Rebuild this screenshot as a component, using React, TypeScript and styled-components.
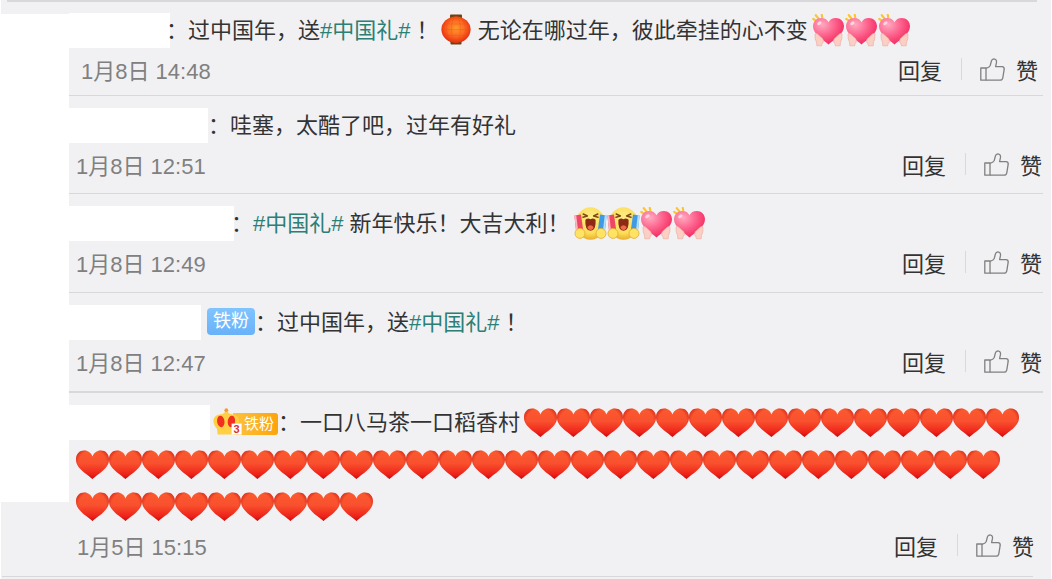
import React from "react";
import styled, { createGlobalStyle } from "styled-components";

const GlobalStyle = createGlobalStyle`
  * { box-sizing: border-box; }
  body {
    margin: 0;
    background: #fff;
    color: #333;
    font-family: "Liberation Sans", "Noto Sans CJK SC", sans-serif;
    font-size: 22px;
  }
`;

const Panel = styled.main`
  min-height: 100vh;
  margin: 0 1px;
  background: #f1f1f4;
`;

const Rule = styled.hr<{ $left: number; $right: number; $thick?: boolean }>`
  height: ${(p) => (p.$thick ? 2 : 1)}px;
  margin: 0 ${(p) => p.$right}px 0 ${(p) => p.$left}px;
  border: 0;
  background: #d8d8da;
`;

const List = styled.ul`
  margin: 0;
  padding: 0;
  list-style: none;
`;

const Item = styled.li`
  display: flex;
`;

const Gutter = styled.div<{ $top: number; $bottom: number }>`
  flex: none;
  width: 68px;
  margin: ${(p) => p.$top}px 0 ${(p) => p.$bottom}px;
  background: #fff;
`;

const Body = styled.article`
  flex: 1;
  min-width: 0;
`;

const Content = styled.div<{ $top: number; $bottom: number }>`
  padding: ${(p) => p.$top}px 0 ${(p) => p.$bottom}px;
`;

const Message = styled.p`
  margin: 0;
  padding: 0 24px 0 7px;
  line-height: 42px;
`;

const HiddenName = styled.span<{ $width: number; $overlap?: number }>`
  display: inline-block;
  width: ${(p) => p.$width}px;
  height: 35px;
  margin-left: -7px;
  margin-right: -${(p) => p.$overlap ?? 0}px;
  vertical-align: -10px;
  background: #fff;
`;

const Topic = styled.a`
  color: #2b7f75;
  text-decoration: none;
`;

const Meta = styled.footer<{ $left: number; $right: number }>`
  display: flex;
  align-items: center;
  justify-content: space-between;
  height: 34px;
  padding: 0 ${(p) => p.$right}px 0 ${(p) => p.$left}px;
`;

const Time = styled.time`
  color: #808080;
`;

const Actions = styled.div`
  display: flex;
  align-items: center;
`;

const Action = styled.button`
  display: flex;
  align-items: center;
  gap: 11px;
  padding: 0;
  border: 0;
  background: none;
  color: inherit;
  font: inherit;
  cursor: pointer;
`;

const Divider = styled.span`
  width: 1px;
  height: 22px;
  margin: 0 18px 0 19px;
  background: #d9d9dc;
`;

const Emoji = styled.svg`
  display: inline-block;
  width: 33px;
  height: 33px;
  vertical-align: -9px;
`;

const EmojiGroup = styled.span`
  margin-left: 4px;
`;

const FanBadge = styled.span`
  display: inline-block;
  height: 27px;
  margin-left: 6px;
  padding: 0 6px;
  border-radius: 4px;
  background: linear-gradient(#80c4ff, #69b1f9);
  color: #fff;
  font-size: 18px;
  line-height: 27px;
  vertical-align: 3px;
`;

const CrownBadge = styled.span`
  display: inline-flex;
  align-items: flex-end;
  height: 27px;
  margin-left: 3px;
  vertical-align: -5px;
`;

const CrownLabel = styled.span`
  height: 22px;
  margin-left: -10px;
  padding: 0 4px 0 11px;
  border-radius: 0 3px 3px 0;
  background: linear-gradient(90deg, #fdc23c, #fca40c);
  color: #fff;
  font-size: 15px;
  line-height: 21px;
`;

const CrownArt = styled.svg`
  position: relative;
  flex: none;
  width: 30px;
  height: 27px;
`;

const Defs = styled.svg`
  position: absolute;
  width: 0;
  height: 0;
`;

const SharedGradients = () => (
  <Defs aria-hidden="true">
    <defs>
      <linearGradient id="redHeart" x1="0" y1="0" x2="0" y2="1">
        <stop offset="0" stopColor="#fb5a2e" />
        <stop offset="0.45" stopColor="#f9502f" />
        <stop offset="1" stopColor="#e8100f" />
      </linearGradient>
      <radialGradient id="redEdge" cx="0.5" cy="0.42" r="0.6">
        <stop offset="0.7" stopColor="#c81010" stopOpacity="0" />
        <stop offset="1" stopColor="#b80d12" stopOpacity="0.75" />
      </radialGradient>
      <radialGradient id="pinkHeart" cx="0.3" cy="0.25" r="0.85">
        <stop offset="0" stopColor="#ffa9c0" />
        <stop offset="0.45" stopColor="#fd6690" />
        <stop offset="1" stopColor="#f31e57" />
      </radialGradient>
      <radialGradient id="lantern" cx="0.5" cy="0.45" r="0.55">
        <stop offset="0" stopColor="#ff9a2b" />
        <stop offset="0.55" stopColor="#fd6a22" />
        <stop offset="1" stopColor="#e62a0f" />
      </radialGradient>
      <radialGradient id="face" cx="0.5" cy="0.35" r="0.65">
        <stop offset="0" stopColor="#fff08a" />
        <stop offset="0.7" stopColor="#fcdc5a" />
        <stop offset="1" stopColor="#e9b02c" />
      </radialGradient>
    </defs>
  </Defs>
);

const heartPath =
  "M16.5 31 C12.5 27 0 21 0 11.5 C0 6 3.5 2.6 8.3 2.6 C12.2 2.6 15.2 5 16.5 8.6 C17.8 5 20.8 2.6 24.7 2.6 C29.5 2.6 33 6 33 11.5 C33 21 20.5 27 16.5 31 Z";

const RedHeart = () => (
  <Emoji viewBox="0 0 33 33" role="img" aria-label="心">
    <path d={heartPath} fill="url(#redHeart)" />
    <path d={heartPath} fill="url(#redEdge)" />
  </Emoji>
);

const PinkHeart = () => (
  <Emoji viewBox="0 0 33 33" role="img" aria-label="比心">
    <g stroke="#fcc42e" strokeWidth="2.2" strokeLinecap="round">
      <path d="M1.3 5 L4 6.6" />
      <path d="M3.8 1.2 L6.4 4.4" />
      <path d="M9.8 1 L10.2 3.2" />
    </g>
    <path
      d="M16.5 30.6 C12 26.5 1 20.5 1 12.6 C1 7.4 4.8 4 9.2 4 C12.6 4 15.2 5.6 16.5 8.2 C17.8 5.6 20.4 4 23.8 4 C28.2 4 32 7.4 32 12.6 C32 20.5 21 26.5 16.5 30.6 Z"
      fill="url(#pinkHeart)"
    />
    <ellipse cx="7.4" cy="9.3" rx="2.4" ry="1.6" fill="#ffd5e0" transform="rotate(-35 7.4 9.3)" />
    <g fill="#fbcfc4" stroke="#e9a698" strokeWidth="0.6">
      <path d="M3 20 Q4.8 18.6 6.2 20.6 L10.8 24.8 Q12.4 28 10.2 29.6 L9.6 31.8 H4.8 L4.6 28.6 Q2.6 25 3 20 Z" />
      <path d="M30 20 Q28.2 18.6 26.8 20.6 L22.2 24.8 Q20.6 28 22.8 29.6 L23.4 31.8 H28.2 L28.4 28.6 Q30.4 25 30 20 Z" />
    </g>
  </Emoji>
);

const Lantern = () => (
  <Emoji viewBox="0 0 33 33" role="img" aria-label="灯笼">
    <rect x="11" y="0.6" width="12" height="4" rx="0.8" fill="#6b4412" />
    <rect x="11.5" y="27.4" width="11" height="3.2" rx="0.8" fill="#6b4412" />
    <ellipse cx="17" cy="15.6" rx="14.6" ry="13.2" fill="url(#lantern)" />
    <g fill="none" stroke="#e8501a" strokeWidth="0.6" opacity="0.6">
      <ellipse cx="17" cy="15.6" rx="9.5" ry="13" />
      <ellipse cx="17" cy="15.6" rx="4.5" ry="13" />
      <path d="M4 10 H30 M2.5 15.6 H31.5 M4 21.4 H30" />
    </g>
  </Emoji>
);

const CheerFace = () => (
  <Emoji viewBox="0 0 33 33" role="img" aria-label="加油">
    <ellipse cx="16.5" cy="16.5" rx="14.8" ry="16.2" fill="url(#face)" />
    <g fill="none" stroke="#7c4a16" strokeWidth="1.5" strokeLinecap="round" strokeLinejoin="round">
      <path d="M9.2 7 L13.4 9 L9 10.2" />
      <path d="M23.8 7 L19.6 9 L24 10.2" />
    </g>
    <path d="M11.4 12.8 Q14 10.4 16.5 12.2 Q19 10.4 21.6 12.8 Q22.4 23.6 16.5 23.8 Q10.6 23.6 11.4 12.8 Z" fill="#8c2a14" />
    <path d="M13.4 20 Q16.5 16.6 19.6 20 Q19 23 16.5 23 Q14 23 13.4 20 Z" fill="#f2684a" />
    <path d="M0.4 8.4 L7 7.4 L9 22 L2 23.4 Z" fill="#ee4763" />
    <path d="M0.4 8.4 L2.2 8.1 L4 23 L2 23.4 Z" fill="#fbb6c0" />
    <path d="M32.6 8.4 L26 7.4 L24 22 L31 23.4 Z" fill="#3f9be6" />
    <path d="M32.6 8.4 L30.8 8.1 L29 23 L31 23.4 Z" fill="#b5defa" />
    <circle cx="6" cy="26.4" r="5" fill="#ffe364" stroke="#e3ac2c" strokeWidth="0.8" />
    <circle cx="27" cy="26.4" r="5" fill="#ffe364" stroke="#e3ac2c" strokeWidth="0.8" />
  </Emoji>
);

const ThumbIcon = () => (
  <svg width="25" height="23" viewBox="0 0 25 23" fill="none" stroke="#808080" strokeWidth="1.3" strokeLinejoin="round" aria-hidden="true">
    <path d="M0.8 10 H6 V22.2 H0.8 Z" />
    <path d="M6 10.4 Q9.6 9.4 10.2 7.6 L11.4 3 Q12 0.8 13.8 0.8 Q16.8 1 16.5 4.4 L15.6 8.6 H22 Q24.4 8.8 24.2 11.2 L22.8 19.8 Q22.2 22.2 20 22.2 H6" />
  </svg>
);

const Crown = () => (
  <CrownArt viewBox="0 0 30 27" aria-label="等级 3" role="img">
    <circle cx="13.3" cy="2.2" r="1.9" fill="#f39a3c" />
    <path d="M4.6 26.4 L4 20.8 Q0 16.6 0.4 12 Q1.4 7.2 6.4 6.6 Q10.6 6.4 12 4 H14.6 Q16.4 6.2 20 6.6 Q25.6 7.6 26 12.6 Q26 17 22.4 20.8 L22 26.4 Z" fill="#ffd044" />
    <ellipse cx="7.8" cy="13.4" rx="3.7" ry="5.8" fill="#f2301f" transform="rotate(-8 7.8 13.4)" />
    <ellipse cx="18.4" cy="13.4" rx="3.7" ry="5.8" fill="#f2301f" transform="rotate(8 18.4 13.4)" />
    <rect x="18.6" y="15.6" width="10" height="11" fill="#fff" />
    <text x="20.4" y="25" fontSize="11" fontWeight="700" fill="#e03030">3</text>
  </CrownArt>
);

interface Comment {
  id: string;
  time: string;
  message: React.ReactNode;
  space: [number, number];
  meta: [number, number];
  gutter?: [number, number];
  thickRule?: boolean;
}

const repeat = (count: number, Icon: React.FC) =>
  Array.from({ length: count }, (_, i) => <Icon key={i} />);

const comments: Comment[] = [
  {
    id: "c1",
    time: "1月8日 14:48",
    space: [8, 9],
    meta: [12, 5],
    gutter: [12, 0],
    message: (
      <>
        <HiddenName $width={101} $overlap={4} />：过中国年，送<Topic href="#topic">#中国礼#</Topic> ！
        <Lantern /> 无论在哪过年，彼此牵挂的心不变
        <EmojiGroup>{repeat(3, PinkHeart)}</EmojiGroup>
      </>
    ),
  },
  {
    id: "c2",
    time: "1月8日 12:51",
    space: [9, 12],
    meta: [7, 1],
    message: (
      <>
        <HiddenName $width={139} />：哇塞，太酷了吧，过年有好礼
      </>
    ),
  },
  {
    id: "c3",
    time: "1月8日 12:49",
    space: [9, 13],
    meta: [7, 1],
    message: (
      <>
        <HiddenName $width={165} $overlap={3} />：<Topic href="#topic">#中国礼#</Topic> 新年快乐！大吉大利！
        <EmojiGroup>
          {repeat(2, CheerFace)}
          {repeat(2, PinkHeart)}
        </EmojiGroup>
      </>
    ),
  },
  {
    id: "c4",
    time: "1月8日 12:47",
    space: [9, 13],
    meta: [7, 1],
    thickRule: true,
    message: (
      <>
        <HiddenName $width={132} />
        <FanBadge>铁粉</FanBadge>：过中国年，送<Topic href="#topic">#中国礼#</Topic> ！
      </>
    ),
  },
  {
    id: "c5",
    time: "1月5日 15:15",
    space: [9, 14],
    meta: [8, 9],
    gutter: [0, 74],
    message: (
      <>
        <HiddenName $width={141} />
        <CrownBadge>
          <Crown />
          <CrownLabel>铁粉</CrownLabel>
        </CrownBadge>
        ：一口八马茶一口稻香村
        <EmojiGroup>{repeat(52, RedHeart)}</EmojiGroup>
      </>
    ),
  },
];

const CommentRow = ({ comment, last }: { comment: Comment; last: boolean }) => {
  const [top, bottom] = comment.space;
  const [left, right] = comment.meta;
  const [gutterTop, gutterBottom] = comment.gutter ?? [0, 0];
  return (
    <Item>
      <Gutter $top={gutterTop} $bottom={gutterBottom} />
      <Body>
        <Content $top={top} $bottom={bottom}>
          <Message>{comment.message}</Message>
          <Meta $left={left} $right={right + 8}>
            <Time>{comment.time}</Time>
            <Actions>
              <Action type="button">回复</Action>
              <Divider />
              <Action type="button">
                <ThumbIcon />赞
              </Action>
            </Actions>
          </Meta>
        </Content>
        {!last && <Rule $left={0} $right={8} $thick={comment.thickRule} />}
      </Body>
    </Item>
  );
};

export default function App() {
  return (
    <>
      <GlobalStyle />
      <SharedGradients />
      <Panel>
        <Rule $left={6} $right={14} $thick />
        <List>
          {comments.map((comment, i) => (
            <CommentRow key={comment.id} comment={comment} last={i === comments.length - 1} />
          ))}
        </List>
        <Rule $left={1} $right={18} />
      </Panel>
    </>
  );
}
